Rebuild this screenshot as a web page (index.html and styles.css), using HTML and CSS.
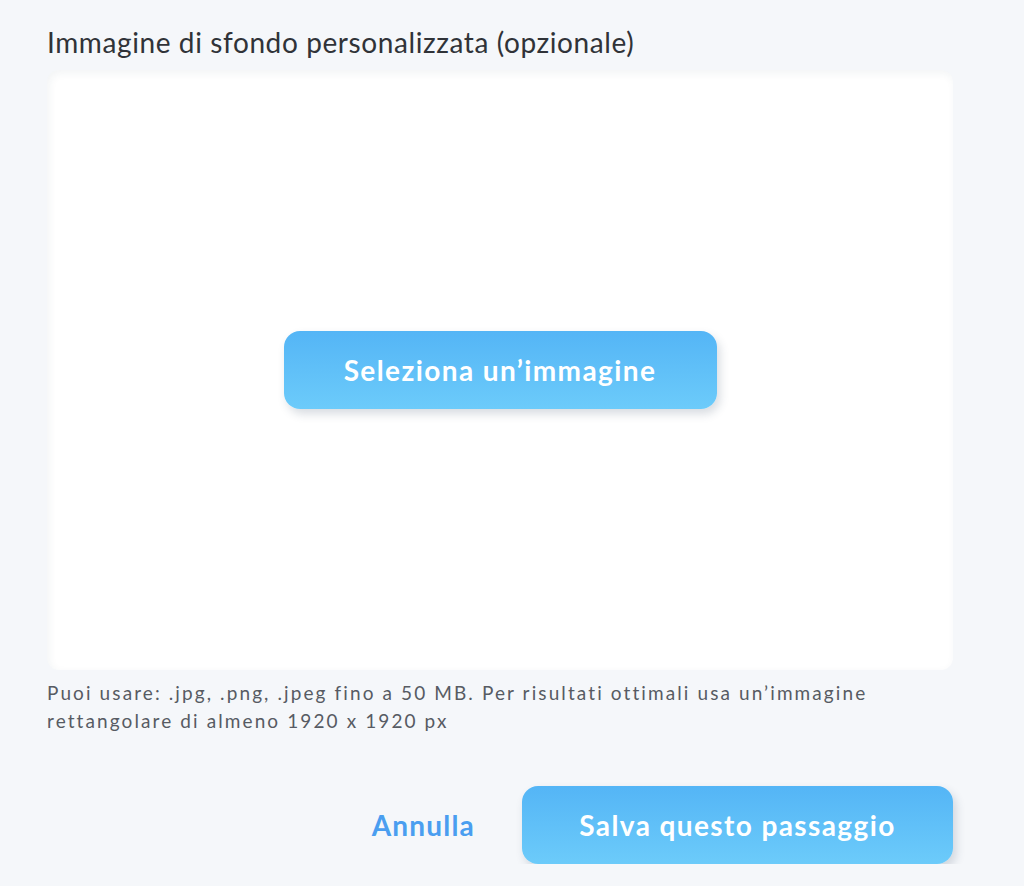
FILE: index.html
```html
<!DOCTYPE html>
<html lang="it">
<head>
  <meta charset="UTF-8" />
  <meta name="viewport" content="width=device-width, initial-scale=1" />
  <title>Immagine di sfondo</title>
  <link rel="stylesheet" href="styles.css">
</head>
<body>
  <div class="step">
    <h2 class="label">Immagine di sfondo personalizzata (opzionale)</h2>

    <div class="dropzone">
      <button class="btn btn-pick">Seleziona un’immagine</button>
    </div>

    <p class="hint">Puoi usare: .jpg, .png, .jpeg fino a 50 MB. Per risultati ottimali usa un’immagine rettangolare di almeno 1920 x 1920 px</p>

    <!-- Actions -->
    <div class="actions">
      <a class="cancel" href="#">Annulla</a>
      <button class="btn btn-save">Salva questo passaggio</button>
    </div>
  </div>
</body>
</html>
```

FILE: styles.css
```css
body {
  margin: 0;
  background: #f5f7fa;
  font-family: Lato, "Open Sans", sans-serif;
  color: #2b2f36;
}

.step {
  width: 906px;
  padding: 26px 0 0 47px;
}

.label {
  margin: 0;
  font-size: 28px;
  font-weight: 400;
  line-height: 32px;
  letter-spacing: 0.6px;
  color: #303338;
}

.dropzone {
  margin-top: 12px;
  height: 600px;
  background: #ffffff;
  border-radius: 12px;
  box-shadow: inset 2px 3px 8px rgba(40, 60, 90, 0.06);
  display: flex;
  justify-content: center;
  align-items: center;
}

.btn {
  border: none;
  border-radius: 16px;
  background: linear-gradient(180deg, #54b5f6 0%, #6ccbfa 100%);
  color: white;
  font-family: Lato, "Open Sans", sans-serif;
  font-weight: 700;
  font-size: 28px;
  letter-spacing: 1.4px;
  cursor: pointer;
  box-shadow: 3px 5px 10px rgba(40, 60, 90, 0.18);
}

.btn-pick {
  width: 433px;
  height: 78px;
}

.hint {
  margin: 9px 0 0;
  font-size: 19px;
  line-height: 28px;
  letter-spacing: 2.1px;
  color: #575b63;
}

.actions {
  margin-top: 51px;
  display: flex;
  justify-content: flex-end;
  align-items: center;
  gap: 47px;
}

.cancel {
  font-size: 28px;
  font-weight: 700;
  letter-spacing: 1.2px;
  color: #4a9ef0;
  text-decoration: none;
}

.btn-save {
  width: 431px;
  height: 78px;
}
```
